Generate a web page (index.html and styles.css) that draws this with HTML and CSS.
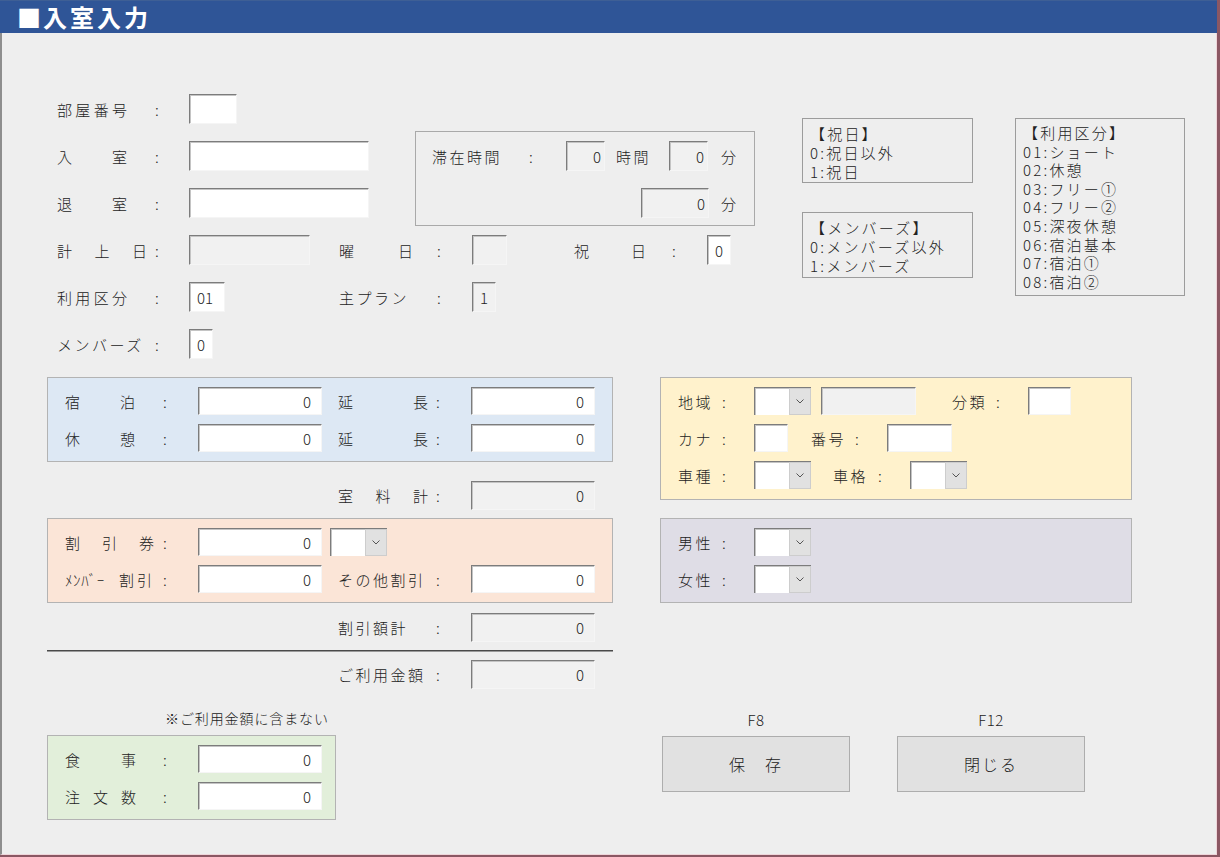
FILE: index.html
```html
<!DOCTYPE html>
<html lang="ja">
<head>
<meta charset="utf-8">
<title>入室入力</title>
<link rel="stylesheet" href="styles.css">
</head>
<body>
<div class="win">
  <header class="titlebar"><span class="sq">■</span>入室入力</header>
  <main class="content">
    <section class="secA">
      <div class="formA">
        <div class="topgroup">
          <div class="col1">
            <div class="row">
              <div class="cell l"><span class="t j w70">部屋番号</span><span class="c">:</span></div>
              <div class="inp w48"></div>
            </div>
            <div class="row">
              <div class="cell l"><span class="t j w70">入室</span><span class="c">:</span></div>
              <div class="inp w180"></div>
            </div>
            <div class="row">
              <div class="cell l"><span class="t j w70">退室</span><span class="c">:</span></div>
              <div class="inp w180"></div>
            </div>
          </div>
          <div class="staybox">
            <div class="row">
              <div class="scell"><span class="t n">滞在時間</span><span class="c">:</span></div>
              <div class="inp dis num tight w39">0</div>
              <span class="unit1 n">時間</span>
              <div class="inp dis num tight w39">0</div>
              <span class="unit2">分</span>
            </div>
            <div class="row">
              <div class="inp dis num tight w68 push209">0</div>
              <span class="unit3">分</span>
            </div>
          </div>
        </div>
        <div class="row r4">
          <div class="cell l"><span class="t j w90">計上日</span><span class="c">:</span></div>
          <div class="inp dis w121"></div>
          <div class="cell m29"><span class="t j w74">曜日</span><span class="c">:</span></div>
          <div class="inp dis w35"></div>
          <div class="cell m67"><span class="t j w72">祝日</span><span class="c">:</span></div>
          <div class="inp w24">0</div>
        </div>
        <div class="row rgap">
          <div class="cell l"><span class="t j w70">利用区分</span><span class="c">:</span></div>
          <div class="inp w36">01</div>
          <div class="cell m114"><span class="t n">主プラン</span><span class="c">:</span></div>
          <div class="inp dis w24">1</div>
        </div>
        <div class="row rgap">
          <div class="cell l"><span class="t n">メンバーズ</span><span class="c">:</span></div>
          <div class="inp w24">0</div>
        </div>
      </div>
      <div class="infocol">
        <div class="info h65">
          <div class="ln">【祝日】</div>
          <div class="ln">0:祝日以外</div>
          <div class="ln">1:祝日</div>
        </div>
        <div class="info h66">
          <div class="ln">【メンバーズ】</div>
          <div class="ln">0:メンバーズ以外</div>
          <div class="ln">1:メンバーズ</div>
        </div>
      </div>
      <div class="info big">
        <div class="ln">【利用区分】</div>
        <div class="ln">01:ショート</div>
        <div class="ln">02:休憩</div>
        <div class="ln">03:フリー①</div>
        <div class="ln">04:フリー②</div>
        <div class="ln">05:深夜休憩</div>
        <div class="ln">06:宿泊基本</div>
        <div class="ln">07:宿泊①</div>
        <div class="ln">08:宿泊②</div>
      </div>
    </section>

    <section class="secB">
      <div class="leftB">
        <div class="panel blue">
          <div class="prow">
            <div class="cell"><span class="t j w70">宿泊</span><span class="c">:</span></div>
            <div class="inp num w124">0</div>
            <div class="cell m16"><span class="t j w90">延長</span><span class="c">:</span></div>
            <div class="inp num w124">0</div>
          </div>
          <div class="prow">
            <div class="cell"><span class="t j w70">休憩</span><span class="c">:</span></div>
            <div class="inp num w124">0</div>
            <div class="cell m16"><span class="t j w90">延長</span><span class="c">:</span></div>
            <div class="inp num w124">0</div>
          </div>
        </div>
        <div class="srow s1">
          <div class="cell"><span class="t j w90">室料計</span><span class="c">:</span></div>
          <div class="inp dis num w124">0</div>
        </div>
        <div class="panel orange">
          <div class="prow">
            <div class="cell"><span class="t j w89">割引券</span><span class="c">:</span></div>
            <div class="inp num w124">0</div>
            <div class="dd m8">
              <span class="arr"><svg width="8" height="5" viewBox="0 0 8 5"><path d="M0.5 0.5 L4 4 L7.5 0.5" fill="none" stroke="#555" stroke-width="1"/></svg></span>
            </div>
          </div>
          <div class="prow">
            <div class="cell"><span class="t hk"><span class="hk1">ﾒﾝﾊﾞｰ</span><span class="hk2">割引</span></span><span class="c">:</span></div>
            <div class="inp num w124">0</div>
            <div class="cell m16"><span class="t n">その他割引</span><span class="c">:</span></div>
            <div class="inp num w124">0</div>
          </div>
        </div>
        <div class="srow s2">
          <div class="cell"><span class="t n">割引額計</span><span class="c">:</span></div>
          <div class="inp dis num w124">0</div>
        </div>
        <div class="sep"></div>
        <div class="srow s3">
          <div class="cell"><span class="t n">ご利用金額</span><span class="c">:</span></div>
          <div class="inp dis num w124">0</div>
        </div>
        <div class="note">※ご利用金額に含まない</div>
        <div class="panel green">
          <div class="prow">
            <div class="cell"><span class="t j w71">食事</span><span class="c">:</span></div>
            <div class="inp num w124">0</div>
          </div>
          <div class="prow">
            <div class="cell"><span class="t j w71">注文数</span><span class="c">:</span></div>
            <div class="inp num w124">0</div>
          </div>
        </div>
      </div>

      <div class="rightB">
        <div class="panel yellow">
          <div class="prow">
            <div class="ycell"><span class="t n">地域</span><span class="c">:</span></div>
            <div class="dd"><span class="arr"><svg width="8" height="5" viewBox="0 0 8 5"><path d="M0.5 0.5 L4 4 L7.5 0.5" fill="none" stroke="#555" stroke-width="1"/></svg></span></div>
            <div class="inp dis w95 m10"></div>
            <div class="ycell m36"><span class="t n">分類</span><span class="c">:</span></div>
            <div class="inp w43"></div>
          </div>
          <div class="prow">
            <div class="ycell"><span class="t n">カナ</span><span class="c">:</span></div>
            <div class="inp w34"></div>
            <div class="ycell m23"><span class="t n">番号</span><span class="c">:</span></div>
            <div class="inp w65"></div>
          </div>
          <div class="prow">
            <div class="ycell"><span class="t n">車種</span><span class="c">:</span></div>
            <div class="dd"><span class="arr"><svg width="8" height="5" viewBox="0 0 8 5"><path d="M0.5 0.5 L4 4 L7.5 0.5" fill="none" stroke="#555" stroke-width="1"/></svg></span></div>
            <div class="ycell m22 w77"><span class="t n">車格</span><span class="c">:</span></div>
            <div class="dd"><span class="arr"><svg width="8" height="5" viewBox="0 0 8 5"><path d="M0.5 0.5 L4 4 L7.5 0.5" fill="none" stroke="#555" stroke-width="1"/></svg></span></div>
          </div>
        </div>
        <div class="panel purple">
          <div class="prow">
            <div class="ycell"><span class="t n">男性</span><span class="c">:</span></div>
            <div class="dd"><span class="arr"><svg width="8" height="5" viewBox="0 0 8 5"><path d="M0.5 0.5 L4 4 L7.5 0.5" fill="none" stroke="#555" stroke-width="1"/></svg></span></div>
          </div>
          <div class="prow">
            <div class="ycell"><span class="t n">女性</span><span class="c">:</span></div>
            <div class="dd"><span class="arr"><svg width="8" height="5" viewBox="0 0 8 5"><path d="M0.5 0.5 L4 4 L7.5 0.5" fill="none" stroke="#555" stroke-width="1"/></svg></span></div>
          </div>
        </div>
        <div class="fkeys">
          <div class="fk">
            <div class="fkl">F8</div>
            <button class="btn" type="button">保　存</button>
          </div>
          <div class="fk">
            <div class="fkl">F12</div>
            <button class="btn" type="button">閉じる</button>
          </div>
        </div>
      </div>
    </section>
  </main>
</div>
</body>
</html>
```

FILE: styles.css
```css
* { box-sizing: border-box; }
html, body { margin: 0; padding: 0; }
body {
  width: 1220px;
  height: 857px;
  overflow: hidden;
  background: #eeeeee;
  font-family: "Noto Sans CJK JP", "Noto Sans", sans-serif;
  font-size: 15px;
  font-weight: 300;
  color: #222;
}
.win {
  width: 1220px;
  height: 857px;
  display: flex;
  flex-direction: column;
  border-right: 3px solid #8b5763;
  border-bottom: 2px solid #8b5763;
}
.titlebar {
  height: 33px;
  flex: none;
  background: #2f5597;
  border-top: 1px solid #3e5f95;
  color: #fff;
  font-weight: 700;
  font-size: 24px;
  letter-spacing: 3px;
  padding-left: 17px;
  display: flex;
  align-items: center;
  line-height: 1;
}
.titlebar .sq { letter-spacing: 2px; }
.content {
  flex: 1;
  background: #eeeeee;
  border-left: 2px solid #8e8e8e;
  border-right: 1px solid #efd6da;
  border-bottom: 1px solid #efd6da;
  padding-top: 61px;
}

/* generic */
.row { display: flex; align-items: center; height: 30px; }
.prow { display: flex; align-items: center; height: 28px; }
.t { display: block; white-space: nowrap; line-height: 1; }
.j { text-align: justify; text-align-last: justify; }
.n { letter-spacing: 2.5px; }
.c { width: 8px; text-align: center; margin-left: auto; line-height: 1; }

.cell { display: flex; align-items: center; width: 133px; padding-right: 29px; flex: none; }
.cell.l { width: 132px; padding-right: 28px; }
.scell { display: flex; align-items: center; width: 134px; padding-right: 31px; flex: none; }
.ycell { display: flex; align-items: center; width: 76px; padding-right: 26px; flex: none; }
.ycell.w77 { width: 77px; }

.w70 { width: 70px; } .w71 { width: 71px; } .w72 { width: 72px; } .w74 { width: 74px; }
.w89 { width: 89px; } .w90 { width: 90px; }

.inp {
  flex: none;
  height: 100%;
  background: #fff;
  border-top: 1px solid #7c7c7c;
  border-left: 1px solid #7c7c7c;
  border-right: 1px solid #f5f5f5;
  border-bottom: 1px solid #f5f5f5;
  box-shadow: inset 1px 1px 0 #c4c4c4;
  display: flex;
  align-items: center;
  padding: 0 10px 0 7px;
  font-size: 15px;
  line-height: 1;
  color: #222;
}
.inp.num { justify-content: flex-end; }
.inp.tight { padding-right: 3px; }
.inp.dis { background: #f1f1f1; }
.w24 { width: 24px; } .w34 { width: 34px; } .w35 { width: 35px; } .w36 { width: 36px; }
.w39 { width: 39px; } .w43 { width: 43px; } .w48 { width: 48px; } .w65 { width: 65px; }
.w68 { width: 68px; } .w95 { width: 95px; } .w121 { width: 121px; } .w124 { width: 124px; }
.w180 { width: 180px; }

.m8 { margin-left: 8px; } .m10 { margin-left: 10px; } .m16 { margin-left: 16px; }
.m22 { margin-left: 22px; } .m23 { margin-left: 23px; } .m29 { margin-left: 29px; }
.m36 { margin-left: 36px; } .m67 { margin-left: 67px; } .m114 { margin-left: 114px; }

/* dropdown */
.dd {
  flex: none;
  width: 57px;
  height: 100%;
  display: flex;
  background: #fff;
  border-top: 1px solid #7c7c7c;
  border-left: 1px solid #7c7c7c;
  box-shadow: inset 1px 1px 0 #c4c4c4;
}
.dd .arr {
  margin-left: auto;
  width: 22px;
  height: 100%;
  background: #e1e1e1;
  border: 1px solid #cdcdcd;
  display: flex;
  align-items: center;
  justify-content: center;
}
.dd .arr svg { display: block; }

/* section A */
.secA { display: flex; align-items: flex-start; margin-left: 55px; }
.formA { width: 745px; flex: none; }
.topgroup { display: flex; align-items: flex-start; }
.col1 { display: flex; flex-direction: column; gap: 17px; width: 312px; }
.staybox {
  margin-left: 46px;
  margin-top: 37px;
  width: 340px;
  height: 95px;
  border: 1px solid #a9a9a9;
  padding: 9px 0 0 16px;
  display: flex;
  flex-direction: column;
  gap: 17px;
}
.unit1 { width: 64px; padding-left: 11px; line-height: 1; flex: none; }
.unit2 { margin-left: 13px; line-height: 1; }
.unit3 { margin-left: 12px; line-height: 1; }
.push209 { margin-left: 209px; }
.r4 { margin-top: 9px; }
.rgap { margin-top: 17px; }

.infocol { width: 171px; flex: none; margin-top: 24px; display: flex; flex-direction: column; gap: 29px; }
.info {
  border: 1px solid #9c9c9c;
  padding: 5px 0 0 7px;
  font-size: 15px;
  letter-spacing: 2.2px;
  white-space: nowrap;
}
.info .ln { height: 19px; line-height: 19px; }
.info.h65 { height: 65px; }
.info.h66 { height: 66px; }
.info.big { width: 170px; height: 178px; margin-left: 42px; margin-top: 24px; flex: none; }
.info.big .ln { height: 18.6px; line-height: 18.6px; }

/* section B */
.secB { display: flex; align-items: flex-start; margin-top: 18px; margin-left: 45px; }
.leftB { width: 566px; flex: none; }
.rightB { width: 472px; flex: none; margin-left: 47px; }

.panel {
  border: 1px solid #b3b3b3;
  padding: 9px 0 9px 17px;
  display: flex;
  flex-direction: column;
  gap: 9px;
}
.blue { background: #dde8f4; }
.orange { background: #fbe5d7; margin-top: 8px; }
.green { background: #e2efda; width: 289px; margin-top: 9px; }
.yellow { background: #fff2cc; padding-bottom: 10px; }
.purple { background: #dfdde6; margin-top: 18px; }

.srow { display: flex; align-items: center; height: 29px; padding-left: 291px; }
.s1 { margin-top: 19px; }
.s2 { margin-top: 10px; }
.s3 { margin-top: 8px; }
.sep { margin-top: 8px; height: 2px; border-top: 1px solid #4a4a4a; border-bottom: 1px solid #9a9a9a; }

.hk { display: flex; align-items: center; }
.hk1 { width: 54px; font-size: 15px; letter-spacing: 0.6px; }
.hk2 { letter-spacing: 3px; }

.note {
  margin-top: 21px;
  margin-left: 118px;
  height: 16px;
  line-height: 16px;
  font-size: 14px;
  letter-spacing: 0.9px;
  white-space: nowrap;
}

.fkeys { display: flex; gap: 47px; margin-top: 108px; margin-left: 2px; }
.fk { width: 188px; display: flex; flex-direction: column; align-items: center; }
.fkl { height: 18px; line-height: 18px; font-size: 15px; letter-spacing: 0.5px; }
.btn {
  margin-top: 7px;
  width: 188px;
  height: 56px;
  background: #e1e1e1;
  border: 1px solid #adadad;
  border-radius: 0;
  font-family: inherit;
  font-weight: 300;
  font-size: 16px;
  letter-spacing: 2px;
  color: #222;
  padding: 0;
}
```
